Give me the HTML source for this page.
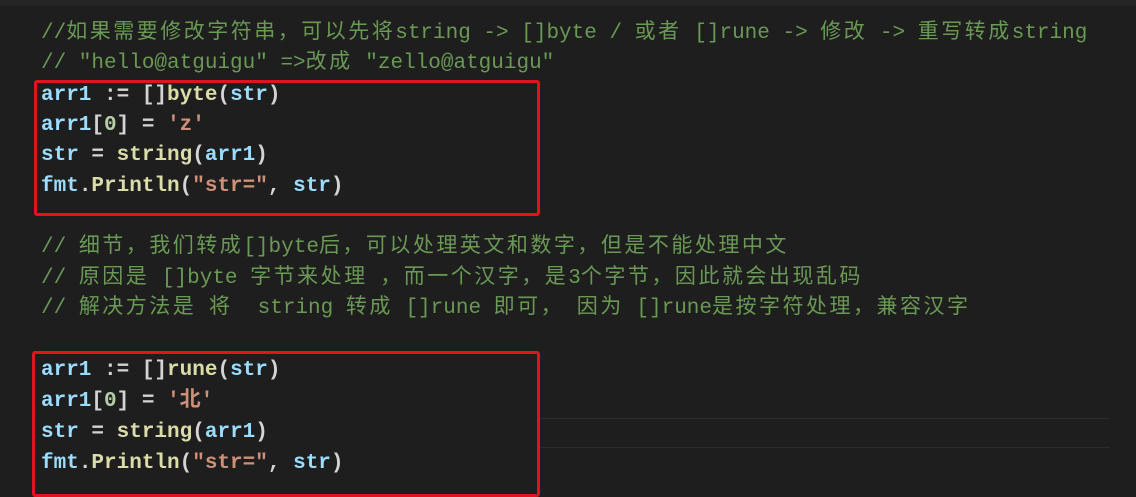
<html><head><style>
body{margin:0;width:1136px;height:489px;background:#1e1e1e;overflow:hidden;position:relative;font-family:"Liberation Mono","Noto Sans CJK SC",monospace;font-size:21px;font-weight:bold;color:#d4d4d4}
.l{position:absolute;left:41px;white-space:pre;line-height:30px}
.c{color:#6a9955;font-weight:normal}.v{color:#9cdcfe}.f{color:#dcdcaa}.s{color:#ce9178}.n{color:#b5cea8}
.z{letter-spacing:2.5px}
.box{position:absolute;border:3px solid #e0141a;border-radius:3px}
</style></head><body>
<div style="position:absolute;left:0;top:0;width:1136px;height:6px;background:#252526"></div>
<div class="l c" style="top:19px">//<span class="z">如果需要修改字符串，可以先将</span>string -> []byte / <span class="z">或者</span> []rune -> <span class="z">修改</span> -> <span class="z">重写转成</span>string</div>
<div class="l c" style="top:49px">// "hello@atguigu" =><span class="z">改成</span> "zello@atguigu"</div>
<div class="l" style="top:81px"><span class="v">arr1</span> := []<span class="f">byte</span>(<span class="v">str</span>)</div>
<div class="l" style="top:111px"><span class="v">arr1</span>[<span class="n">0</span>] = <span class="s">'z'</span></div>
<div class="l" style="top:141px"><span class="v">str</span> = <span class="f">string</span>(<span class="v">arr1</span>)</div>
<div class="l" style="top:172px"><span class="v">fmt</span>.<span class="f">Println</span>(<span class="s">"str="</span>, <span class="v">str</span>)</div>
<div class="box" style="left:34px;top:80px;width:500px;height:130px"></div>
<div class="l c" style="top:233px">// <span class="z">细节，我们转成</span>[]byte<span class="z">后，可以处理英文和数字，但是不能处理中文</span></div>
<div class="l c" style="top:264px">// <span class="z">原因是</span> []byte <span class="z">字节来处理</span> <span class="z">，而一个汉字，是</span>3<span class="z">个字节，因此就会出现乱码</span></div>
<div class="l c" style="top:294px">// <span class="z">解决方法是</span> <span class="z">将</span>  string <span class="z">转成</span> []rune <span class="z">即可，</span> <span class="z">因为</span> []rune<span class="z">是按字符处理，兼容汉字</span></div>
<div style="position:absolute;left:540px;top:418px;width:570px;height:28px;border-top:1px solid #2c2c2c;border-bottom:1px solid #2c2c2c"></div>
<div class="l" style="top:356px"><span class="v">arr1</span> := []<span class="f">rune</span>(<span class="v">str</span>)</div>
<div class="l" style="top:387px"><span class="v">arr1</span>[<span class="n">0</span>] = <span class="s">'北'</span></div>
<div class="l" style="top:418px"><span class="v">str</span> = <span class="f">string</span>(<span class="v">arr1</span>)</div>
<div class="l" style="top:449px"><span class="v">fmt</span>.<span class="f">Println</span>(<span class="s">"str="</span>, <span class="v">str</span>)</div>
<div class="box" style="left:32px;top:351px;width:502px;height:140px"></div>
</body></html>
